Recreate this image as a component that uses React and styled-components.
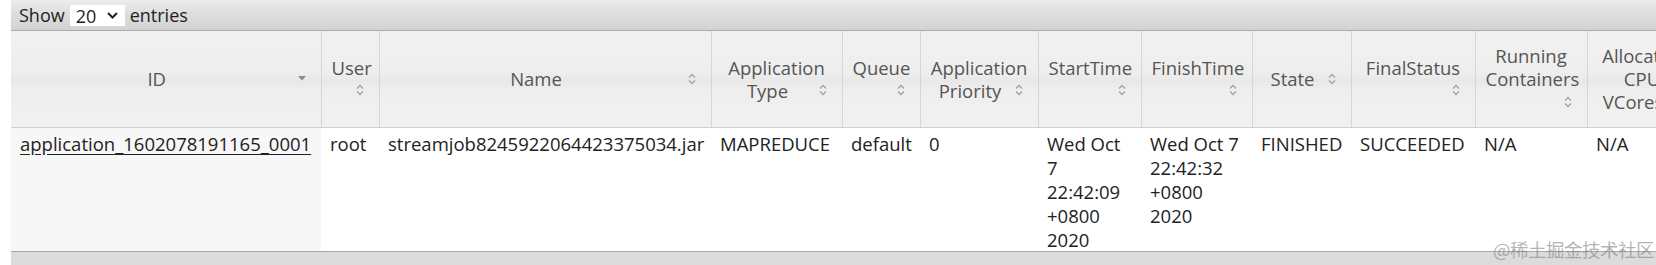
import React from 'react'
import styled, { createGlobalStyle } from 'styled-components'

const Global = createGlobalStyle`
  html, body {
    margin: 0;
    background: #fff;
    overflow: hidden;
  }
  body {
    font-family: 'Open Sans', 'Noto Sans', sans-serif;
  }
`

const Page = styled.div`
  position: relative;
  height: 265px;
  overflow: hidden;
`

const Wrapper = styled.div`
  margin-left: 11px;
  width: 2200px;
`

const Toolbar = styled.div`
  display: flex;
  align-items: center;
  gap: 5px;
  height: 30px;
  padding-left: 8px;
  background: linear-gradient(to bottom, #ececec 0%, #dedede 45%, #d2d2d2 100%);
  border-bottom: 1px solid #ababab;
  font-size: 18px;
  color: #222;
`

const Select = styled.div`
  display: flex;
  align-items: center;
  justify-content: space-between;
  width: 55px;
  height: 21px;
  padding: 0 7px 0 6px;
  box-sizing: border-box;
  background: #fff;
  margin-top: 1px;
`

const ScrollBody = styled.div`
  height: 220px;
  overflow: hidden;
`

const Table = styled.table`
  table-layout: fixed;
  border-collapse: collapse;
  width: 2160px;
  font-size: 18.5px;
`

const Th = styled.th`
  height: 96px;
  box-sizing: border-box;
  padding: 4px 10px;
  vertical-align: middle;
  text-align: center;
  font-weight: normal;
  line-height: 23px;
  color: #555;
  background: linear-gradient(to bottom, #f1f1f1 0%, #eeeeee 42%, #e8e8e8 52%, #eeeeee 62%, #f1f1f1 100%);
  border-left: 1px solid #d6d6d6;
  border-bottom: 1px solid #d0d0d0;
  &:first-child {
    border-left: none;
  }
`

const Icon = styled.span`
  float: right;
  display: flex;
  align-items: center;
  justify-content: center;
  width: 18px;
  height: 23px;
`

const Td = styled.td`
  vertical-align: top;
  text-align: left;
  padding: 4px 8px 0 9px;
  line-height: 24px;
  height: 124px;
  box-sizing: border-box;
  color: #222;
  background: ${p => (p.$sorted ? '#f7f7f7' : '#fff')};
  overflow: hidden;
  overflow-wrap: normal;
`

const AppLink = styled.a`
  color: #222;
  text-decoration: underline;
  text-underline-offset: 3px;
`

const Footer = styled.div`
  height: 40px;
  background: #dcdcdc;
  border-top: 1px solid #a9a9a9;
`

const Watermark = styled.div`
  position: absolute;
  right: 2px;
  bottom: 4px;
  font-family: 'Noto Sans CJK SC', sans-serif;
  font-size: 18.5px;
  letter-spacing: -0.5px;
  line-height: 24px;
  color: rgba(130, 130, 130, 0.6);
  pointer-events: none;
`

const SortBoth = () => (
  <svg width="8" height="12" viewBox="0 0 8 12">
    <path d="M1 4.5 L4 1.5 L7 4.5 M1 7.5 L4 10.5 L7 7.5" fill="none" stroke="#a4a4a4" strokeWidth="1.4" />
  </svg>
)

const SortDesc = () => (
  <svg width="8" height="5" viewBox="0 0 8 5">
    <path d="M0 0 L8 0 L4 4.5 Z" fill="#8a8a8a" />
  </svg>
)

const columns = [
  { label: 'ID', width: 310, sort: 'desc' },
  { label: 'User', width: 58 },
  { label: 'Name', width: 332 },
  { label: 'Application Type', width: 131 },
  { label: 'Queue', width: 78 },
  { label: 'Application Priority', width: 118 },
  { label: 'StartTime', width: 103 },
  { label: 'FinishTime', width: 111 },
  { label: 'State', width: 99 },
  { label: 'FinalStatus', width: 124 },
  { label: 'Running Containers', width: 112 },
  { label: 'Allocated CPU VCores', width: 110 },
  { label: 'Allocated Memory MB', width: 118 },
  { label: 'Reserved CPU VCores', width: 110 },
  { label: 'Reserved Memory MB', width: 118 },
  { label: '% of Queue', width: 96 },
  { label: '% of Cluster', width: 104 }
]

const row = [
  <AppLink href="#">application_1602078191165_0001</AppLink>,
  'root',
  'streamjob8245922064423375034.jar',
  'MAPREDUCE',
  'default',
  '0',
  'Wed Oct 7 22:42:09 +0800 2020',
  'Wed Oct 7 22:42:32 +0800 2020',
  'FINISHED',
  'SUCCEEDED',
  'N/A',
  'N/A',
  'N/A',
  'N/A',
  'N/A',
  '0.0',
  '0.0'
]

const App = () => {
  return (
    <Page>
      <Global />
      <Wrapper>
        <Toolbar>
          <span>Show</span>
          <Select>
            <span>20</span>
            <svg width="11" height="7" viewBox="0 0 11 7">
              <path d="M1 1 L5.5 5.5 L10 1" fill="none" stroke="#222" strokeWidth="2" />
            </svg>
          </Select>
          <span>entries</span>
        </Toolbar>
        <ScrollBody>
          <Table>
            <colgroup>
              {columns.map(c => (
                <col key={c.label} style={{ width: c.width }} />
              ))}
            </colgroup>
            <thead>
              <tr>
                {columns.map(c => (
                  <Th key={c.label}>
                    {c.label}
                    <Icon>{c.sort === 'desc' ? <SortDesc /> : <SortBoth />}</Icon>
                  </Th>
                ))}
              </tr>
            </thead>
            <tbody>
              <tr>
                {row.map((v, i) => (
                  <Td key={i} $sorted={i === 0}>{v}</Td>
                ))}
              </tr>
            </tbody>
          </Table>
        </ScrollBody>
        <Footer />
      </Wrapper>
      <Watermark>@稀土掘金技术社区</Watermark>
    </Page>
  )
}

export default App
